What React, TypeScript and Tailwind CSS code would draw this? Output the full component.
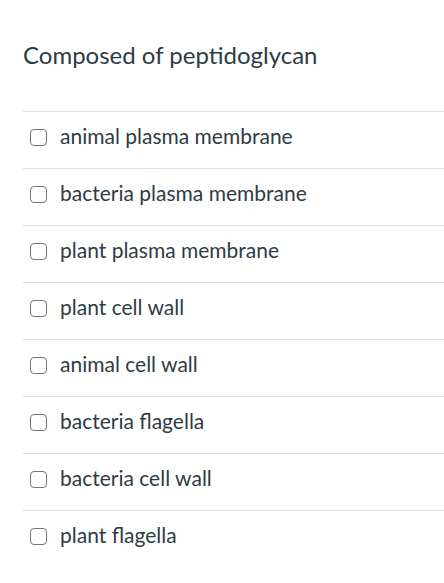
import React from "react";

const items = [
  "animal plasma membrane",
  "bacteria plasma membrane",
  "plant plasma membrane",
  "plant cell wall",
  "animal cell wall",
  "bacteria flagella",
  "bacteria cell wall",
  "plant flagella",
];

export default function App() {
  return (
    <div className="w-[444px] h-[583px] bg-white overflow-hidden pl-[23px] text-[#2d3b45]" style={{ fontFamily: "Lato, 'Noto Sans', sans-serif" }}>
      <div className="pt-[40px] h-[111px]">
        <h1 className="text-[24px] leading-[30px] font-normal">Composed of peptidoglycan</h1>
      </div>
      <div>
        {items.map((t) => (
          <div key={t} className="h-[57px] border-t border-[#dde0e3] flex items-start pl-[7px]">
            <span className="mt-[17px] w-[17px] h-[17px] rounded-[4px] border-[1.5px] border-[#6b7780] bg-white shrink-0" />
            <span className="mt-[12px] ml-[13px] text-[21px] leading-[24px]">{t}</span>
          </div>
        ))}
      </div>
    </div>
  );
}
